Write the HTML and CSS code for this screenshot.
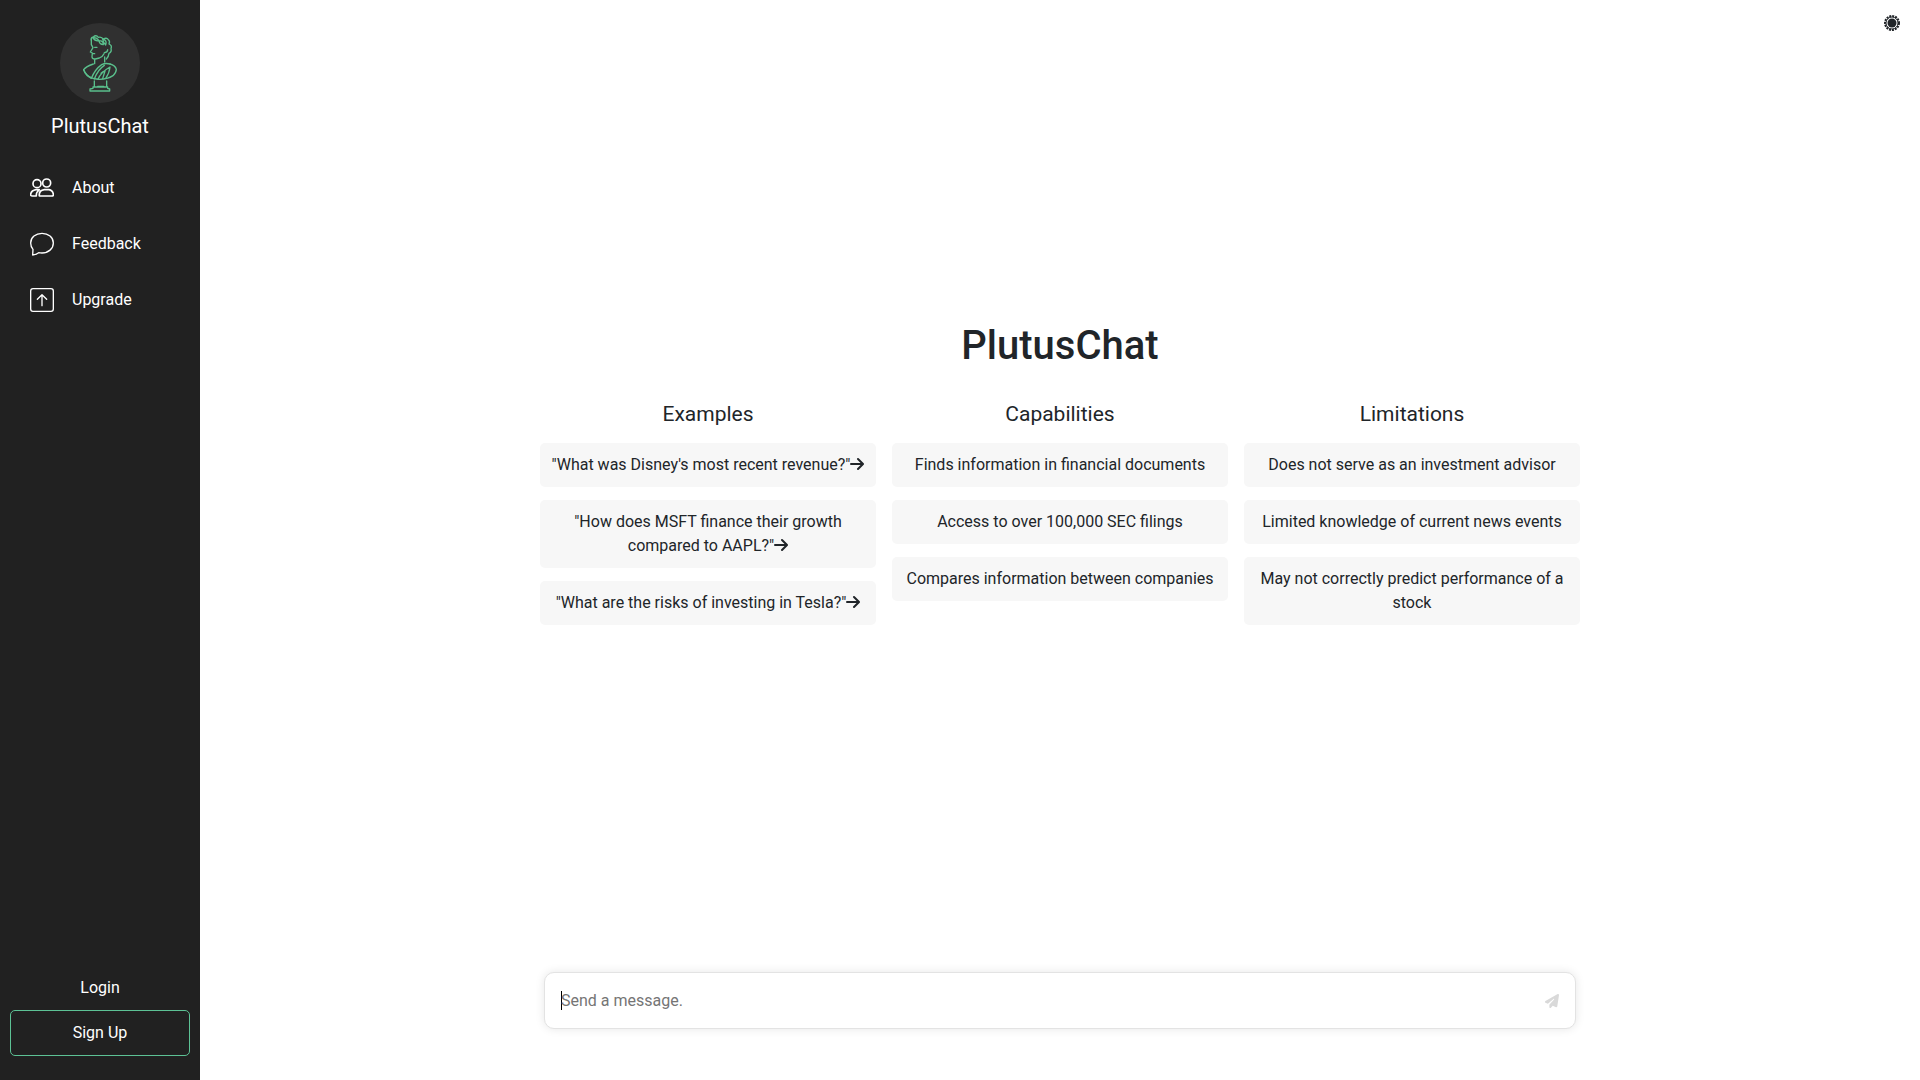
FILE: index.html
```html
<!DOCTYPE html>
<html lang="en">
<head>
<meta charset="utf-8">
<meta name="viewport" content="width=device-width, initial-scale=1">
<title>PlutusChat</title>
<link rel="stylesheet" href="styles.css">
</head>
<body>
<div class="app">
  <aside class="sidebar">
    <a class="brand" href="#">
      <svg class="brand-logo" viewBox="0 0 240 240" aria-hidden="true">
        <circle class="logo-disc" cx="120" cy="120" r="120"/>
        <g class="logo-lines">
          <path d="M94 48L94 65L99 74L91 87L97 90L96 102Q97 109 106 108L118 105Q128 101 132 92"/>
          <path d="M104 73h7M98 92h6"/>
          <path d="M94 51Q92 43 100 42Q108 34 115 43Q125 40 130 49Q139 42 145 50Q151 55 147 63Q157 67 153 77Q156 87 147 91Q146 101 139 108"/>
          <path d="M98 44Q106 56 117 53Q110 42 98 44M117 53Q118 64 130 65Q131 53 117 53M128 48Q142 52 137 66Q130 61 128 48"/>
          <path d="M133 89Q143 88 143 80"/>
          <path d="M104 110L104 122M134 102L134 117"/>
          <path d="M100 123Q78 130 71 140Q73 149 82 158Q98 169 119 169Q142 169 159 158Q169 149 169 139Q166 127 150 123"/>
          <path d="M71 140Q77 155 94 166Q105 139 125 125Q136 119 150 123M103 168Q113 140 133 127M123 151Q130 145 135 144L128 167M114 169Q123 147 150 132Q148 151 137 166"/>
          <path d="M103 174V191M140 174V191M113 190H131M99 192H143V196L149 198V204H90V198L99 196Z"/>
        </g>
      </svg>
      <span class="brand-name">PlutusChat</span>
    </a>
    <nav class="nav">
      <a class="nav-link" href="#">
        <svg class="nav-icon nav-icon-bold" viewBox="0 0 72 72" aria-hidden="true">
          <circle cx="21" cy="23" r="12"/>
          <circle cx="50" cy="21" r="12"/>
          <path d="M28 60Q26 43 43 41H57Q68 43 70 54Q71 60 66 60ZM28 41H18Q4 44 2 54Q1 60 7 60H19Q18 49 28 41Z"/>
        </svg>
        About
      </a>
      <a class="nav-link" href="#">
        <svg class="nav-icon" viewBox="0 0 72 72" aria-hidden="true">
          <path d="M8 69L9 52Q2 44 2 33C2 16 17 4 36 4S70 16 70 33S55 63 36 63Q31 63 26 62Q18 68 8 69Z"/>
        </svg>
        Feedback
      </a>
      <a class="nav-link" href="#">
        <svg class="nav-icon" viewBox="0 0 72 72" aria-hidden="true">
          <rect x="2" y="2" width="68" height="68" rx="7"/>
          <path d="M36 53V21M22 34L36 20L50 34"/>
        </svg>
        Upgrade
      </a>
    </nav>
    <div class="account">
      <a class="login" href="#">Login</a>
      <button class="signup" type="button">Sign Up</button>
    </div>
  </aside>

  <main class="main">
    <button class="theme-toggle" type="button" aria-label="Toggle theme">
      <svg class="theme-icon" viewBox="0 0 16 16" aria-hidden="true">
        <circle class="sun-rays" cx="8" cy="8" r="7"/>
        <circle class="sun-ring" cx="8" cy="8" r="6"/>
        <circle class="sun-core" cx="8" cy="8" r="4.5"/>
      </svg>
    </button>

    <section class="intro">
      <h1 class="title">PlutusChat</h1>
      <div class="columns">
        <section class="column">
          <h2 class="column-title">Examples</h2>
          <button class="card" type="button">"What was Disney's most recent revenue?"<svg class="arrow" viewBox="0 0 14 14" aria-hidden="true"><path d="M1 7H12M8 2L13 7L8 12"/></svg></button>
          <button class="card" type="button">"How does MSFT finance their growth compared to AAPL?"<svg class="arrow" viewBox="0 0 14 14" aria-hidden="true"><path d="M1 7H12M8 2L13 7L8 12"/></svg></button>
          <button class="card" type="button">"What are the risks of investing in Tesla?"<svg class="arrow" viewBox="0 0 14 14" aria-hidden="true"><path d="M1 7H12M8 2L13 7L8 12"/></svg></button>
        </section>
        <section class="column">
          <h2 class="column-title">Capabilities</h2>
          <p class="card">Finds information in financial documents</p>
          <p class="card">Access to over 100,000 SEC filings</p>
          <p class="card">Compares information between companies</p>
        </section>
        <section class="column">
          <h2 class="column-title">Limitations</h2>
          <p class="card">Does not serve as an investment advisor</p>
          <p class="card">Limited knowledge of current news events</p>
          <p class="card">May not correctly predict performance of a stock</p>
        </section>
      </div>
    </section>

    <form class="composer">
      <span class="caret"></span>
      <input class="message" type="text" placeholder="Send a message." aria-label="Message">
      <button class="send" type="button" aria-label="Send">
        <svg class="send-icon" viewBox="0 0 512 512" aria-hidden="true">
          <path d="M498 6c11 7 16 20 14 33l-64 416c-2 10-8 18-16 23s-19 6-28 2l-120-50-68 74c-9 10-23 13-36 8s-20-17-20-30v-84c0-4 2-8 4-11l168-183c6-6 6-16 0-22s-16-6-22-1L106 361 18 317C7 312 0 301 0 289s6-23 16-29L464 4c11-6 24-5 34 2z"/>
        </svg>
      </button>
    </form>
  </main>
</div>
</body>
</html>
```
FILE: styles.css
```css
* {
  box-sizing: border-box;
}

body {
  margin: 0;
  font-family: Roboto, "Liberation Sans", sans-serif;
  font-size: 16px;
  line-height: 24px;
  color: #212529;
  background: #fff;
}

a {
  color: inherit;
  text-decoration: none;
}

button {
  font: inherit;
  color: inherit;
  border: 0;
  background: none;
  cursor: pointer;
}

.app {
  display: flex;
  min-height: 100vh;
}

/* Sidebar */

.sidebar {
  display: flex;
  flex-direction: column;
  flex: none;
  width: 200px;
  padding: 23px 10px 24px;
  color: #fff;
  background: #212121;
}

.brand {
  display: flex;
  flex-direction: column;
  align-items: center;
  gap: 8px;
}

.brand-logo {
  width: 80px;
  height: 80px;
}

.logo-disc {
  fill: #303030;
}

.logo-lines {
  fill: none;
  stroke: #5abf8c;
  stroke-width: 4;
  stroke-linecap: round;
  stroke-linejoin: round;
}

.brand-name {
  font-size: 20px;
  line-height: 30px;
}

.nav {
  display: flex;
  flex-direction: column;
  margin-top: 19px;
}

.nav-link {
  display: flex;
  align-items: center;
  gap: 18px;
  height: 56px;
  padding: 0 20px;
}

.nav-icon {
  width: 24px;
  height: 24px;
  fill: none;
  stroke: #fff;
  stroke-width: 4;
  stroke-linecap: round;
  stroke-linejoin: round;
}

.nav-icon-bold {
  stroke-width: 5;
}

.account {
  display: flex;
  flex-direction: column;
  gap: 10px;
  margin-top: auto;
  text-align: center;
}

.signup {
  height: 46px;
  border: 1px solid #5dc295;
  border-radius: 5px;
}

/* Main area */

.main {
  position: relative;
  display: flex;
  flex-direction: column;
  align-items: center;
  flex: 1;
  padding: 0 16px 51px;
}

.theme-toggle {
  position: absolute;
  top: 15px;
  right: 20px;
  padding: 0;
}

.theme-icon {
  display: block;
  width: 16px;
  height: 16px;
  fill: none;
}

.sun-rays {
  stroke: #212529;
  stroke-width: 2;
  stroke-dasharray: 2 1;
}

.sun-ring {
  stroke: #212529;
  stroke-width: 1;
}

.sun-core {
  fill: #212529;
}

.intro {
  display: flex;
  flex-direction: column;
  justify-content: center;
  flex: 1;
  gap: 28px;
  width: 100%;
  max-width: 1040px;
}

.title {
  margin: 0;
  font-size: 40px;
  font-weight: 500;
  line-height: 48px;
  text-align: center;
}

.columns {
  display: grid;
  grid-template-columns: repeat(3, 1fr);
  align-items: start;
  gap: 16px;
}

.column {
  display: flex;
  flex-direction: column;
  gap: 13px;
}

.column-title {
  margin: 0;
  font-size: 21px;
  font-weight: 400;
  line-height: 32px;
  text-align: center;
}

.card {
  margin: 0;
  padding: 10px;
  border-radius: 5px;
  text-align: center;
  background: #f7f7f7;
}

.arrow {
  width: 14px;
  height: 14px;
  vertical-align: -1px;
  fill: none;
  stroke: #212529;
  stroke-width: 2;
  stroke-linecap: round;
  stroke-linejoin: round;
}

.composer {
  display: flex;
  align-items: center;
  width: 100%;
  max-width: 1032px;
  height: 57px;
  margin-top: 26px;
  padding: 0 16px;
  border: 1px solid #e3e3e3;
  border-radius: 10px;
  background: #fff;
  box-shadow: 0 0 10px rgba(0, 0, 0, 0.1);
}

.caret {
  width: 1px;
  height: 19px;
  margin-right: -1px;
  background: #000;
}

.message {
  flex: 1;
  min-width: 0;
  padding: 0;
  border: 0;
  outline: 0;
  font: inherit;
  color: inherit;
  background: none;
}

.message::placeholder {
  color: #757575;
  opacity: 1;
}

.send {
  padding: 0;
}

.send-icon {
  display: block;
  width: 14px;
  height: 14px;
  fill: #d9d9d9;
}
```
